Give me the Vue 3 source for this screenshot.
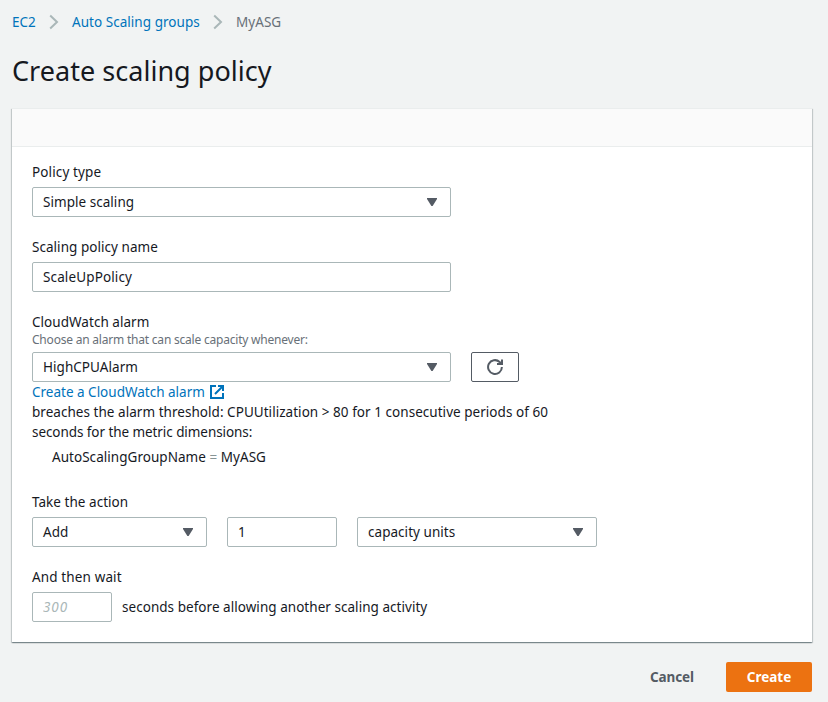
<script setup>
import { ref } from 'vue'

const policyName = ref('ScaleUpPolicy')
const amount = ref('1')
const cooldown = ref('')
</script>

<template>
  <div class="page">
    <nav class="breadcrumbs">
      <a class="link crumb-root">EC2</a>
      <svg class="chevron" viewBox="0 0 10 16"><path d="M1.2 1.5 L8 8 L1.2 14.5" /></svg>
      <a class="link crumb-groups">Auto Scaling groups</a>
      <svg class="chevron" viewBox="0 0 10 16"><path d="M1.2 1.5 L8 8 L1.2 14.5" /></svg>
      <span class="current">MyASG</span>
    </nav>

    <h1>Create scaling policy</h1>

    <section class="card">
      <header class="card-header"></header>
      <div class="card-body">
        <div class="field">
          <label class="loose">Policy type</label>
          <div class="select wide">
            <span>Simple scaling</span>
            <svg class="caret" viewBox="0 0 10 8"><path d="M0 0H10V1L5.6 8H4.4L0 1Z" /></svg>
          </div>
        </div>

        <div class="field">
          <label>Scaling policy name</label>
          <input v-model="policyName" class="input wide loose" type="text" />
        </div>

        <div class="field alarm">
          <label>CloudWatch alarm</label>
          <div class="hint">Choose an alarm that can scale capacity whenever:</div>
          <div class="row">
            <div class="select wide">
              <span>HighCPUAlarm</span>
              <svg class="caret" viewBox="0 0 10 8"><path d="M0 0H10V1L5.6 8H4.4L0 1Z" /></svg>
            </div>
            <button class="refresh" type="button" aria-label="Refresh">
              <svg viewBox="0 0 16 16">
                <path d="M14.9 8 A6.9 6.9 0 1 1 12.6 2.9 L14.5 4.8" />
                <path d="M15 0.5 V5 H10" />
              </svg>
            </button>
          </div>
          <a class="link create-alarm">
            <span>Create a CloudWatch alarm</span>
            <svg class="external" viewBox="0 0 14 14">
              <path d="M6 1H1V13H13V8" />
              <path d="M8 1H13V6M13 1L5 9" />
            </svg>
          </a>
          <div class="text">breaches the alarm threshold: CPUUtilization &gt; 80 for 1 consecutive periods of 60</div>
          <div class="text tight">seconds for the metric dimensions:</div>
          <div class="text dimension">AutoScalingGroupName <span class="equals">=</span> MyASG</div>
        </div>

        <div class="field">
          <label>Take the action</label>
          <div class="row">
            <div class="select action">
              <span>Add</span>
              <svg class="caret" viewBox="0 0 10 8"><path d="M0 0H10V1L5.6 8H4.4L0 1Z" /></svg>
            </div>
            <input v-model="amount" class="input amount" type="text" />
            <div class="select units">
              <span>capacity units</span>
              <svg class="caret" viewBox="0 0 10 8"><path d="M0 0H10V1L5.6 8H4.4L0 1Z" /></svg>
            </div>
          </div>
        </div>

        <div class="field">
          <label class="loose">And then wait</label>
          <div class="row cooldown-row">
            <input v-model="cooldown" class="input cooldown" type="text" placeholder="300" />
            <span>seconds before allowing another scaling activity</span>
          </div>
        </div>
      </div>
    </section>

    <footer class="actions">
      <button class="cancel" type="button">Cancel</button>
      <button class="create" type="button">Create</button>
    </footer>
  </div>
</template>

<style>
body {
  margin: 0;
  background: #f1f3f3;
}
</style>

<style scoped>
.page {
  box-sizing: border-box;
  height: 702px;
  padding: 12px 16px 10px 12px;
  overflow: hidden;
  background: #f1f3f3;
  color: #16191f;
  font-family: "Noto Sans", "Open Sans", sans-serif;
  font-size: 13.5px;
  line-height: 20px;
  letter-spacing: 0.04px;
  white-space: nowrap;
}
.breadcrumbs {
  display: flex;
  align-items: center;
  height: 20px;
}
.link {
  color: #0073bb;
}
.crumb-root {
  width: 24px;
}
.crumb-groups {
  width: 128px;
}
.chevron {
  width: 10px;
  height: 16px;
  margin: 0 13px;
  fill: none;
  stroke: #aab7b8;
  stroke-width: 2;
}
.current {
  color: #687078;
}
h1 {
  height: 36px;
  margin: 21px 0 19px;
  font-size: 27px;
  font-weight: 400;
  line-height: 36px;
  letter-spacing: 0.03px;
}
.card {
  box-sizing: border-box;
  height: 534px;
  background: #fff;
  border-top: 1px solid #eaeded;
  box-shadow: 0 1px 1px 0 rgba(0, 28, 36, 0.3), 1px 1px 1px 0 rgba(0, 28, 36, 0.15), -1px 1px 1px 0 rgba(0, 28, 36, 0.15);
}
.card-header {
  box-sizing: border-box;
  height: 38px;
  background: #fafafa;
  border-bottom: 1px solid #eaeded;
}
.card-body {
  display: flex;
  flex-direction: column;
  gap: 20px;
  padding: 15px 20px 20px;
}
.field {
  display: flex;
  flex-direction: column;
  align-items: flex-start;
}
label {
  display: block;
  height: 20px;
  margin-bottom: 5px;
}
.select,
.input {
  box-sizing: border-box;
  height: 30px;
  padding: 0 10px;
  background: #fff;
  border: 1px solid #aab7b8;
  border-radius: 2px;
}
.select {
  display: flex;
  align-items: center;
  justify-content: space-between;
  padding-right: 13px;
}
.input {
  margin: 0;
  color: inherit;
  font: inherit;
  letter-spacing: inherit;
  outline: none;
}
.input::placeholder {
  color: #aab7b8;
  font-style: italic;
  letter-spacing: 0.9px;
  opacity: 1;
}
.loose,
.input.loose {
  letter-spacing: 0.13px;
}
.tight {
  letter-spacing: -0.07px;
}
.caret {
  width: 10px;
  height: 8px;
  fill: #545b64;
}
.wide {
  width: 419px;
}
.row {
  display: flex;
  align-items: center;
  gap: 20px;
}
.alarm {
  padding-bottom: 5px;
}
.alarm label {
  margin-bottom: 0;
}
.hint {
  height: 16px;
  margin-bottom: 4px;
  color: #687078;
  font-size: 12px;
  line-height: 16px;
  letter-spacing: -0.21px;
}
.refresh {
  display: flex;
  align-items: center;
  justify-content: center;
  box-sizing: border-box;
  width: 48px;
  height: 30px;
  padding: 0;
  background: #fff;
  border: 1px solid #545b64;
  border-radius: 2px;
}
.refresh svg {
  width: 16px;
  height: 16px;
  fill: none;
  stroke: #545b64;
  stroke-width: 2;
}
.create-alarm {
  display: flex;
  align-items: center;
  height: 20px;
}
.create-alarm span {
  width: 178px;
  letter-spacing: 0;
}
.external {
  width: 14px;
  height: 14px;
  fill: none;
  stroke: #0073bb;
  stroke-width: 2;
}
.text {
  height: 20px;
}
.dimension {
  margin: 5px 0 0 20px;
}
.equals {
  color: #879596;
}
.action {
  width: 175px;
}
.amount {
  width: 110px;
}
.units {
  width: 240px;
}
.cooldown-row {
  gap: 10px;
}
.cooldown {
  width: 80px;
}
.actions {
  display: flex;
  justify-content: flex-end;
  margin-top: 20px;
}
.actions button {
  height: 30px;
  padding: 0;
  border: 0;
  border-radius: 2px;
  font: inherit;
  font-weight: 700;
  letter-spacing: -0.1px;
}
.cancel {
  width: 86px;
  margin-right: 11px;
  background: transparent;
  color: #545b64;
}
.actions .create {
  width: 86px;
  background: #ec7211;
  color: #fff;
  letter-spacing: 0;
}
</style>
